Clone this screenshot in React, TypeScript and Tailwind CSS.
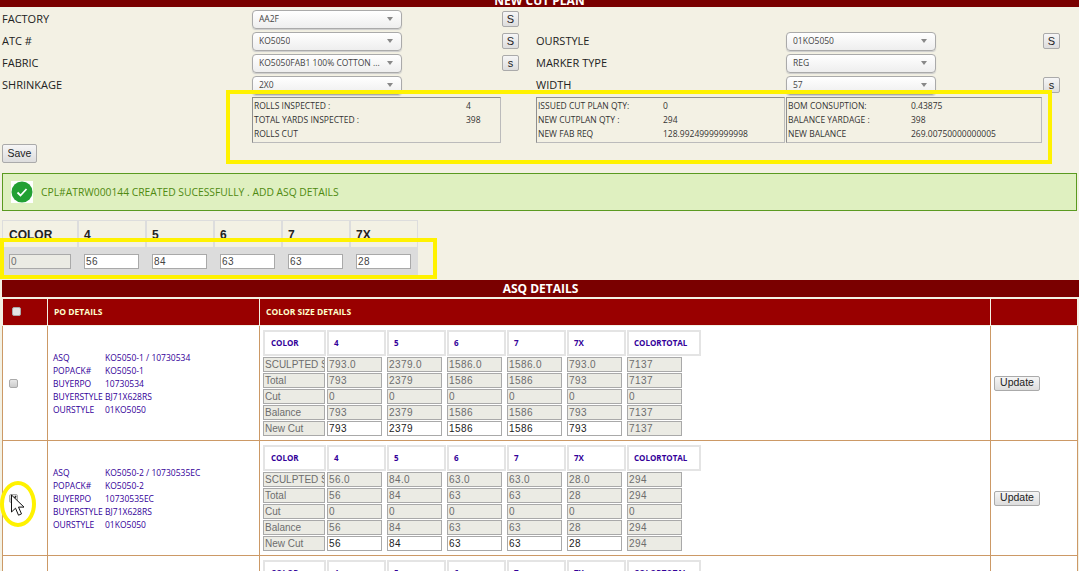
import React from "react";

const sizes = ["4", "5", "6", "7", "7X"];
const uiFont = "font-['Open_Sans','Noto_Sans',sans-serif]";
const inFont = "font-['Liberation_Sans',Arial,sans-serif]";

function Sel({ v }: { v: string }) {
  return (
    <div className={`w-[150px] h-[19px] shrink-0 rounded-[4px] border border-[#aaaaaa] bg-gradient-to-b from-white to-[#eeeeee] shadow-[0_1px_1px_#cccccc] flex items-center justify-between pl-[6px] pr-[8px] text-[8.5px] text-[#444444] ${uiFont}`}>
      <span className="whitespace-nowrap overflow-hidden">{v}</span>
      <span className="w-0 h-0 ml-1 shrink-0 border-x-[3px] border-x-transparent border-t-[4px] border-t-[#888888]" />
    </div>
  );
}

function Btn({ t, w = "w-[17px]" }: { t: string; w?: string }) {
  return (
    <div className={`${w} h-[16px] flex items-center justify-center rounded-[2px] border border-[#aaaaaa] bg-gradient-to-b from-[#f6f6f6] to-[#dddddd] text-[11px] text-[#222222] ${inFont}`}>{t}</div>
  );
}

function FormRow({ l1, v1, b1, l2, v2, b2 }: { l1: string; v1: string; b1?: string; l2?: string; v2?: string; b2?: string }) {
  return (
    <div className={`flex items-center h-[22px] text-[11px] text-[#222222] ${uiFont}`}>
      <div className="w-[252px] pl-[2px] shrink-0">{l1}</div>
      <Sel v={v1} />
      <div className="w-[134px] shrink-0 pl-[100px]">{b1 ? <Btn t={b1} /> : null}</div>
      {l2 ? (
        <>
          <div className="w-[250px] shrink-0">{l2}</div>
          <Sel v={v2 as string} />
          {b2 ? <div className="ml-[107px]"><Btn t={b2} /></div> : null}
        </>
      ) : null}
    </div>
  );
}

function Summary({ w, vx, rows }: { w: string; vx: string; rows: [string, string][] }) {
  return (
    <div className={`${w} h-[46px] shrink-0 border border-[#8f8f8f] border-r-[#bbbbbb] border-b-[#bbbbbb] pl-[1px] pt-[1px] text-[8.5px] leading-[14px] text-[#333333] ${uiFont}`}>
      {rows.map(([a, b]) => (
        <div key={a} className="flex h-[14px] whitespace-nowrap">
          <span className={vx}>{a}</span>
          <span>{b}</span>
        </div>
      ))}
    </div>
  );
}

function Field({ v, w, on, label }: { v: string; w: string; on?: boolean; label?: boolean }) {
  return (
    <div className={`${w} h-[15px] shrink-0 overflow-hidden whitespace-nowrap border border-[#a9a9a9] pl-[1px] text-[10px] leading-[13px] ${label ? "" : "tracking-[0.4px]"} ${inFont} ${on ? "bg-white text-[#222222]" : "bg-[#ebebe4] text-[#6d6d6d]"}`}>{v}</div>
  );
}

function SizeTable({ vals }: { vals: string[][] }) {
  const labels = ["SCULPTED SIZE", "Total", "Cut", "Balance", "New Cut"];
  const heads = ["COLOR", ...sizes, "COLORTOTAL"];
  return (
    <div className="pl-[3px] pt-[4px]">
      <div className={`flex gap-[1px] text-[8px] font-bold text-[#330099] ${uiFont}`}>
        {heads.map((h, i) => (
          <div key={h} className={`h-[26px] border-2 border-[#e4e4e4] flex items-center ${i === 0 ? "w-[63px] pl-[6px]" : i === 6 ? "w-[74px] pl-[5px]" : "w-[59px] pl-[5px]"}`}>{h}</div>
        ))}
      </div>
      <div className="flex flex-col gap-[1px] mt-[1px]">
        {labels.map((l, r) => (
          <div key={l} className="flex gap-[2px]">
            <Field v={l} w="w-[62px]" label />
            {vals[r].map((v, i) => (
              <Field key={i} v={v} w={i === 0 ? "w-[55px]" : "w-[55px] ml-[3px]"} on={r === 4 && i < 5} />
            ))}
          </div>
        ))}
      </div>
    </div>
  );
}

function Row({ asq, pack, po, vals, checked }: { asq: string; pack: string; po: string; vals: string[][]; checked?: boolean }) {
  const info: [string, string][] = [["ASQ", asq], ["POPACK#", pack], ["BUYERPO", po], ["BUYERSTYLE", "BJ71X628RS"], ["OURSTYLE", "01KO5050"]];
  return (
    <tr className="h-[115px]">
      <td className="border border-[#cc9966] bg-white align-middle">
        <div className="ml-[6px] w-[9px] h-[9px] rounded-[2px] border border-[#aaaaaa] bg-gradient-to-b from-[#e8e8e8] to-[#cccccc] flex items-center justify-center">
          {checked ? (
            <svg width="7" height="7" viewBox="0 0 7 7">
              <path d="M1 3.5l1.8 2L6 1" fill="none" stroke="#222222" strokeWidth="1.3" />
            </svg>
          ) : null}
        </div>
      </td>
      <td className={`border border-[#cc9966] bg-white align-middle pl-[5px] text-[8.5px] leading-[13px] text-[#330099] ${uiFont}`}>
        {info.map(([a, b]) => (
          <div key={a} className="flex h-[13px] whitespace-nowrap">
            <span className="w-[52px] shrink-0">{a}</span>
            <span>{b}</span>
          </div>
        ))}
      </td>
      <td className="border border-[#cc9966] bg-white align-top">
        <SizeTable vals={vals} />
      </td>
      <td className="border border-[#cc9966] bg-white align-middle pl-[3px]">
        <div className={`w-[46px] h-[15px] flex items-center justify-center rounded-[2px] border border-[#aaaaaa] bg-gradient-to-b from-[#f6f6f6] to-[#dddddd] text-[10.5px] text-[#222222] ${inFont}`}>Update</div>
      </td>
    </tr>
  );
}

const r1 = [
  ["793.0", "2379.0", "1586.0", "1586.0", "793.0", "7137"],
  ["793", "2379", "1586", "1586", "793", "7137"],
  ["0", "0", "0", "0", "0", "0"],
  ["793", "2379", "1586", "1586", "793", "7137"],
  ["793", "2379", "1586", "1586", "793", "7137"],
];
const r2 = [
  ["56.0", "84.0", "63.0", "63.0", "28.0", "294"],
  ["56", "84", "63", "63", "28", "294"],
  ["0", "0", "0", "0", "0", "0"],
  ["56", "84", "63", "63", "28", "294"],
  ["56", "84", "63", "63", "28", "294"],
];

export default function App() {
  return (
    <div className="relative w-[1079px] h-[571px] overflow-hidden bg-[#f3f1e4]">
      <div className={`h-[7px] bg-[#7a0000] overflow-hidden text-center text-[12px] leading-[10px] font-bold text-white ${uiFont}`}>
        <div className="-mt-[4px]">NEW CUT PLAN</div>
      </div>
      <div className="pt-[1px] h-[90px]">
        <FormRow l1="FACTORY" v1="AA2F" b1="S" />
        <FormRow l1="ATC #" v1="KO5050" b1="S" l2="OURSTYLE" v2="01KO5050" b2="S" />
        <FormRow l1="FABRIC" v1="KO5050FAB1 100% COTTON ..." b1="s" l2="MARKER TYPE" v2="REG" />
        <FormRow l1="SHRINKAGE" v1="2X0" l2="WIDTH" v2="57" b2="s" />
      </div>
      <div className="flex ml-[252px] h-[47px]">
        <Summary w="w-[249px]" vx="w-[212px] shrink-0" rows={[["ROLLS INSPECTED :", "4"], ["TOTAL YARDS INSPECTED :", "398"], ["ROLLS CUT", ""]]} />
        <div className="w-[35px] shrink-0" />
        <Summary w="w-[249px] mr-[1px]" vx="w-[125px] shrink-0" rows={[["ISSUED CUT PLAN QTY:", "0"], ["NEW CUTPLAN QTY :", "294"], ["NEW FAB REQ", "128.99249999999998"]]} />
        <Summary w="w-[256px]" vx="w-[123px] shrink-0" rows={[["BOM CONSUPTION:", "0.43875"], ["BALANCE YARDAGE :", "398"], ["NEW BALANCE", "269.00750000000005"]]} />
      </div>
      <div className={`ml-[2px] w-[35px] h-[19px] flex items-center justify-center rounded-[2px] border border-[#aaaaaa] bg-gradient-to-b from-[#f6f6f6] to-[#dddddd] text-[10.5px] text-[#222222] ${inFont}`}>Save</div>
      <div className={`mt-[10px] ml-[2px] w-[1075px] h-[38px] border border-[#5a9a20] bg-[#dff0c0] flex items-center pl-[8px] text-[10.3px] text-[#4f8a10] ${uiFont}`}>
        <div className="w-[22px] h-[22px] bg-white flex items-center justify-center mr-[8px] shrink-0">
          <svg width="22" height="22" viewBox="0 0 22 22">
            <circle cx="11" cy="11" r="10.5" fill="#22a033" />
            <path d="M6.5 11.5l3 3 6-6.5" fill="none" stroke="#ffffff" strokeWidth="1.8" />
          </svg>
        </div>
        <span className="pt-[2px]">CPL#ATRW000144 CREATED SUCESSFULLY . ADD ASQ DETAILS</span>
      </div>
      <div className="ml-[2px] mt-[9px] w-[416px]">
        <div className="flex h-[27px]">
          {["COLOR", ...sizes].map((h, i) => (
            <div key={h} className={`${i === 0 ? "w-[76px] pl-[6px]" : "w-[68px] pl-[5px]"} border border-[#dddddd] border-b-0 pt-[6px] text-[12px] leading-[16px] font-bold text-[#222222] ${inFont}`}>{h}</div>
          ))}
        </div>
        <div className="h-[28px] bg-[#dcdcdc] flex items-center pl-[7px]">
          <div className={`h-[15px] w-[62px] border border-[#a9a9a9] bg-[#ebebe4] text-[#6d6d6d] text-[10px] leading-[13px] pl-[1px] mr-[13px] ${inFont}`}>0</div>
          {["56", "84", "63", "63", "28"].map((v, i) => (
            <div key={i} className={`w-[55px] h-[15px] border border-[#a9a9a9] bg-white text-[#444444] text-[10px] tracking-[0.4px] leading-[13px] pl-[1px] ${i < 4 ? "mr-[13px]" : ""} ${inFont}`}>{v}</div>
          ))}
        </div>
      </div>
      <div className={`mt-[5px] ml-[2px] h-[17px] bg-[#7a0000] text-center text-[12px] leading-[17px] font-bold text-white ${uiFont}`}>ASQ DETAILS</div>
      <table className="ml-[2px] mt-[1px] w-[1075px] table-fixed border-collapse">
        <colgroup>
          <col className="w-[45px]" />
          <col className="w-[212px]" />
          <col className="w-[731px]" />
          <col className="w-[87px]" />
        </colgroup>
        <thead>
          <tr className={`h-[27px] bg-[#990000] text-left text-[8.5px] font-bold text-[#ffffcc] ${uiFont}`}>
            <th className="border border-[#f3f1e4]">
              <div className="ml-[9px] -mt-[1px] w-[9px] h-[9px] rounded-[2px] border border-[#aaaaaa] bg-[#e4e4e4]" />
            </th>
            <th className="border border-[#f3f1e4] pl-[6px]">PO DETAILS</th>
            <th className="border border-[#f3f1e4] pl-[6px]">COLOR SIZE DETAILS</th>
            <th className="border border-[#f3f1e4]" />
          </tr>
        </thead>
        <tbody>
          <Row asq="KO5050-1 / 10730534" pack="KO5050-1" po="10730534" vals={r1} />
          <Row asq="KO5050-2 / 10730535EC" pack="KO5050-2" po="10730535EC" vals={r2} checked />
          <Row asq="KO5050-3 / 10730536" pack="KO5050-3" po="10730536" vals={r2} />
        </tbody>
      </table>

      <div className="absolute left-[226px] top-[90px] w-[826px] h-[74px] border-4 border-[#fff200]" />
      <div className="absolute left-0 top-[238px] w-[437px] h-[41px] border-4 border-[#fff200]" />
      <div className="absolute left-0 top-[481px] w-[36px] h-[46px] rounded-[50%] border-[4px] border-[#fff200]" />
      <svg className="absolute left-[10px] top-[494px]" width="16" height="24" viewBox="0 0 16 24">
        <path d="M1.5 1v17l4-3.8 3 7 3-1.3-3-6.8h5.5z" fill="#ffffff" stroke="#111111" strokeWidth="1" />
      </svg>
    </div>
  );
}
